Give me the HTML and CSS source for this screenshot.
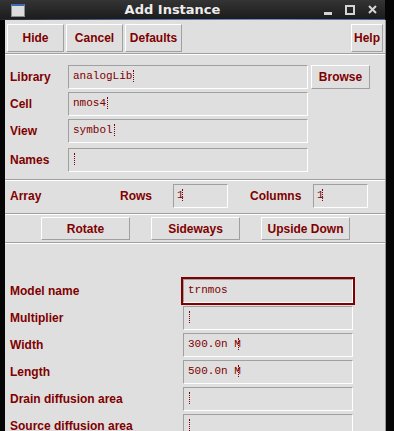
FILE: index.html
```html
<!DOCTYPE html>
<html lang="en">
<head>
    <meta charset="UTF-8">
    <title>Add Instance</title>
    <link rel="stylesheet" href="styles.css">
</head>
<body>
<div class="titlebar">
    <div class="win-icon"><span></span></div>
    <div class="title">Add Instance</div>
    <div class="controls">
        <span class="ctl-min"></span>
        <span class="ctl-max"></span>
        <svg class="ctl-close" width="9" height="9" viewBox="0 0 9 9">
            <path d="M1 1 L8 8 M8 1 L1 8" stroke="#d4d4d4" stroke-width="2"/>
        </svg>
    </div>
</div>
<div class="accent"></div>

<div class="panel">
    <div class="toolbar">
        <button class="btn tool">Hide</button>
        <button class="btn tool">Cancel</button>
        <button class="btn tool">Defaults</button>
        <div class="spacer"></div>
        <button class="btn help">Help</button>
    </div>
    <div class="sep"></div>

    <div class="cell-form">
        <label class="lbl">Library</label>
        <div class="field">analogLib<span class="caret"></span></div>
        <button class="btn browse">Browse</button>

        <label class="lbl">Cell</label>
        <div class="field">nmos4<span class="caret"></span></div>
        <div></div>

        <label class="lbl">View</label>
        <div class="field">symbol<span class="caret"></span></div>
        <div></div>

        <label class="lbl names">Names</label>
        <div class="field names"><span class="caret"></span></div>
        <div></div>
    </div>
    <div class="sep"></div>

    <div class="array-row">
        <label class="lbl">Array</label>
        <label class="lbl">Rows</label>
        <div class="field small">1<span class="caret over"></span></div>
        <div></div>
        <label class="lbl">Columns</label>
        <div class="field small">1<span class="caret over"></span></div>
    </div>
    <div class="sep"></div>

    <div class="orient-row">
        <button class="btn orient">Rotate</button>
        <button class="btn orient">Sideways</button>
        <button class="btn orient">Upside Down</button>
    </div>
    <div class="sep"></div>

    <div class="params">
        <label class="lbl">Model name</label>
        <div class="field focus">trnmos</div>

        <label class="lbl">Multiplier</label>
        <div class="field"><span class="caret"></span></div>

        <label class="lbl">Width</label>
        <div class="field">300.0n M<span class="caret over"></span></div>

        <label class="lbl">Length</label>
        <div class="field">500.0n M<span class="caret over"></span></div>

        <label class="lbl">Drain diffusion area</label>
        <div class="field"><span class="caret"></span></div>

        <label class="lbl">Source diffusion area</label>
        <div class="field"><span class="caret"></span></div>
    </div>
</div>
</body>
</html>
```

FILE: styles.css
```css
html, body {
    margin: 0;
    padding: 0;
}
body {
    width: 394px;
    height: 431px;
    overflow: hidden;
    background-color: #050505;
    font-family: "Liberation Sans", Arial, sans-serif;
}

/* window title bar */
.titlebar {
    width: 385px;
    height: 19px;
    display: flex;
    align-items: center;
    background: linear-gradient(#343434, #1c1c1c);
}
.win-icon {
    width: 12px;
    height: 10px;
    margin-left: 11px;
    border: 1px solid #8c8c8c;
    border-top: 2px solid #3f67b8;
    background: #dcdcdc;
    margin-top: 1px;
}
.title {
    flex: 1;
    text-align: center;
    color: #ececec;
    font-family: "DejaVu Sans", sans-serif;
    font-weight: bold;
    font-size: 13px;
    padding-right: 4px;
    padding-bottom: 1px;
}
.controls {
    display: flex;
    align-items: center;
    gap: 13px;
    margin-right: 8px;
}
.ctl-min {
    width: 8px;
    height: 3px;
    background: #d4d4d4;
    margin-top: 8px;
}
.ctl-max {
    width: 6px;
    height: 6px;
    border: 2px solid #d4d4d4;
}
.accent {
    width: 385px;
    height: 1px;
    background: linear-gradient(to right, #242830, #5878b0 40%, #6f8fc8 70%, #4a66a0);
}

/* panel */
.panel {
    box-sizing: border-box;
    width: 381px;
    height: 411px;
    margin-left: 5px;
    background: #dfdfdf;
    border-right: 1px solid #9a9a9a;
    color: #800000;
}
.btn {
    box-sizing: border-box;
    background: #dfdfdf;
    border: 1px solid;
    border-color: #ffffff #a0a0a0 #a0a0a0 #ffffff;
    color: #800000;
    font-family: "Liberation Sans", Arial, sans-serif;
    font-weight: bold;
    font-size: 12px;
    padding: 0;
    margin: 0;
}
.sep {
    height: 1px;
    border-top: 1px solid #a0a0a0;
    background: #ffffff;
}
.lbl {
    font-weight: bold;
    font-size: 12px;
    line-height: 24px;
}
.field {
    box-sizing: border-box;
    height: 24px;
    border: 1px solid;
    border-color: #a0a0a0 #ffffff #ffffff #a0a0a0;
    font-family: "Liberation Mono", "Courier New", monospace;
    font-size: 11px;
    line-height: 14px;
    padding: 3px 0 0 4px;
    white-space: pre;
}
.caret {
    display: inline-block;
    width: 0;
    height: 12px;
    border-left: 1px dotted #800000;
    vertical-align: -3px;
    margin-left: 1px;
}
.caret.over {
    margin-left: -3px;
}

/* toolbar */
.toolbar {
    display: flex;
    padding: 4px 2px 1px 2px;
    gap: 2px;
}
.tool {
    width: 57px;
    height: 28px;
}
.spacer {
    flex: 1;
}
.help {
    width: 32px;
    height: 28px;
}

/* cell selection */
.cell-form {
    display: grid;
    grid-template-columns: 55px 240px 59px;
    column-gap: 3px;
    row-gap: 3px;
    padding: 10px 0 7px 5px;
}
.cell-form .names {
    margin-top: 2px;
}
.browse {
    height: 24px;
}

/* array */
.array-row {
    display: grid;
    grid-template-columns: 110px 53px 55px 22px 63px 55px;
    padding: 3px 0 5px 5px;
}
.field.small {
    padding-left: 3px;
}
.field.small .caret.over {
    margin-left: -2px;
}

/* orientation */
.orient-row {
    display: flex;
    gap: 21px;
    padding: 2px 0 2px 36px;
}
.orient {
    width: 89px;
    height: 23px;
}

/* parameters */
.params {
    display: grid;
    grid-template-columns: 173px 170px;
    row-gap: 3px;
    padding: 35px 0 0 5px;
}
.field.focus {
    outline: 2px solid #800000;
}
```
